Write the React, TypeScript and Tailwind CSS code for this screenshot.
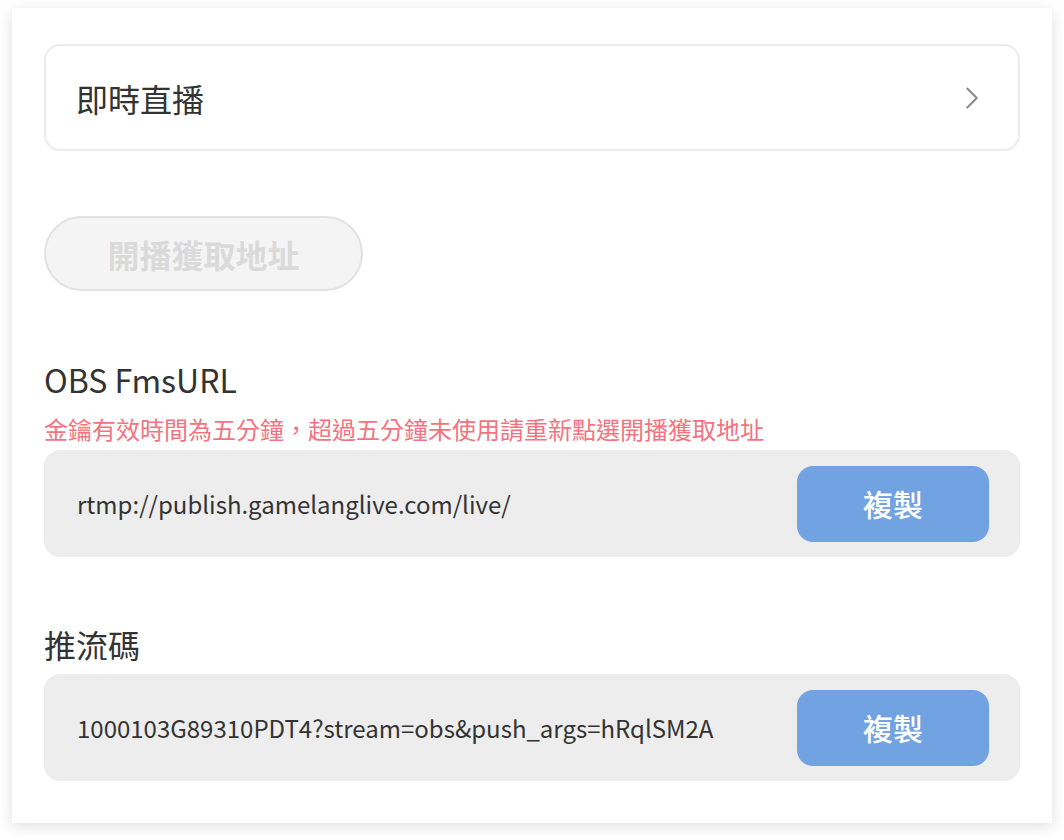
import { ChevronRight } from "lucide-react";

const FONT = "font-['Noto_Sans_CJK_TC','Noto_Sans',sans-serif]";

function CopyRow({ value }: { value: string }) {
    return (
        <div className="flex items-center justify-between h-[107px] rounded-2xl bg-[#ededed] pl-[33px] pr-[31px]">
            <span className="text-[24px] text-[#333333] leading-[32px]">{value}</span>
            <button className="w-[192px] h-[76px] rounded-2xl bg-[#71a3e3] text-white text-[30px] font-medium flex items-center justify-center">
                複製
            </button>
        </div>
    );
}

export default function App() {
    return (
        <div className={`min-h-[840px] bg-white pt-[8px] pl-[12px] ${FONT}`}>
            <div className="w-[1040px] h-[815px] bg-white shadow-[0_3px_14px_rgba(0,0,0,0.13)] pt-[36px] px-[32px]">
                <div className="flex items-center justify-between h-[107px] rounded-2xl border-2 border-[#ececec] pl-[30px] pr-[27px]">
                    <span className="text-[32px] text-[#333333] leading-[40px]">即時直播</span>
                    <ChevronRight className="w-[38px] h-[38px] text-[#8a8a8a]" strokeWidth={1.3} />
                </div>

                <button className="mt-[65px] w-[319px] h-[75px] rounded-full border-2 border-[#e2e2e2] bg-[#f4f4f4] text-[#dadada] text-[32px] font-bold flex items-center justify-center">
                    開播獲取地址
                </button>

                <div className="mt-[68px] text-[32px] text-[#333333] leading-[40px] h-[40px]">OBS FmsURL</div>
                <div className="mt-[14px] text-[24px] text-[#f4737e] leading-[32px]">
                    金鑰有效時間為五分鐘，超過五分鐘未使用請重新點選開播獲取地址
                </div>
                <div className="mt-[5px]">
                    <CopyRow value="rtmp://publish.gamelanglive.com/live/" />
                </div>

                <div className="mt-[67px] text-[32px] text-[#333333] leading-[40px] h-[40px]">推流碼</div>
                <div className="mt-[10px]">
                    <CopyRow value="1000103G89310PDT4?stream=obs&push_args=hRqlSM2A" />
                </div>
            </div>
        </div>
    );
}
